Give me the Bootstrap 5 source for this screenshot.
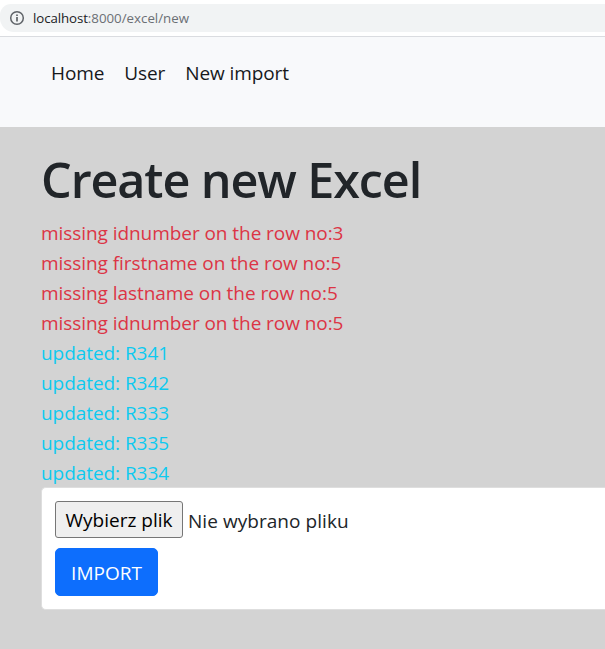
<!DOCTYPE html>
<html lang="pl">
<head>
<meta charset="utf-8">
<meta name="viewport" content="width=device-width, initial-scale=1">
<title>Create new Excel</title>
<link href="https://cdn.jsdelivr.net/npm/bootstrap@5.3.0/dist/css/bootstrap.min.css" rel="stylesheet">
<style>
body { font-family: "Open Sans", "Noto Sans", sans-serif; font-size: 19px; line-height: 30px; background: #d3d3d3; }
.address-bar { height: 37px; padding-top: 4px; border-bottom: 1px solid #dadce0; }
.address-pill { height: 28px; padding-left: 9px; background: #f1f3f4; border-radius: 11px 0 0 14px; font-size: 13.3px; line-height: 28px; color: #6b6f74; }
.address-pill b { font-weight: 400; color: #202124; letter-spacing: -.1px; }
.top-nav { height: 90px; background: #f8f9fb; padding: 21px 0 0 51px; gap: 20px; letter-spacing: -.1px; }
.top-nav a { color: #16181b; }
.page-body { padding: 22px 0 0 41px; }
.page-title { font-size: 48.5px; line-height: 60px; font-weight: 600; margin: 0 0 9px; letter-spacing: -1.1px; }
.log { letter-spacing: -.06px; }
.import-card { height: 123px; margin-top: -1px; padding: 13px; border-color: #dedede; border-radius: 5px; }
.pick { width: 128px; height: 37px; border: 1px solid #767676; border-radius: 3px; background: #efefef; color: #000; padding: 0; line-height: 37px; }
.picked { padding: 2px 0 0 5px; letter-spacing: .05px; }
.send { width: 103px; height: 48px; border-radius: 5px; font-size: inherit; margin-top: 10px; padding: 2px 0 0; background: #0d6efd; }
</style>
<script src="https://cdn.jsdelivr.net/npm/bootstrap@5.3.0/dist/js/bootstrap.bundle.min.js"></script>
</head>
<body>
<header class="address-bar bg-white">
  <div class="address-pill d-flex align-items-center">
    <svg width="16" height="16" viewBox="0 0 16 16" fill="none" stroke="#5f6368" stroke-width="1.5"><circle cx="8" cy="8" r="6.3"/><path d="M8 7v4.4M8 4.4V6" stroke-width="1.7"/></svg>
    <div class="ms-2"><b>localhost</b><span>:8000/excel/new</span></div>
  </div>
</header>
<nav class="top-nav d-flex align-items-start">
  <a class="text-decoration-none" href="#">Home</a>
  <a class="text-decoration-none" href="#">User</a>
  <a class="text-decoration-none" href="#">New import</a>
</nav>
<main class="page-body">
  <h1 class="page-title">Create new Excel</h1>
  <div class="log">
    <div class="text-danger">missing idnumber on the row no:3</div>
    <div class="text-danger">missing firstname on the row no:5</div>
    <div class="text-danger">missing lastname on the row no:5</div>
    <div class="text-danger">missing idnumber on the row no:5</div>
    <div class="text-info">updated: R341</div>
    <div class="text-info">updated: R342</div>
    <div class="text-info">updated: R333</div>
    <div class="text-info">updated: R335</div>
    <div class="text-info">updated: R334</div>
  </div>
  <form class="card import-card align-items-start border-end-0 rounded-end-0">
    <div class="d-flex align-items-center">
      <button type="button" class="pick">Wybierz plik</button>
      <div class="picked">Nie wybrano pliku</div>
    </div>
    <button type="button" class="btn btn-primary send">IMPORT</button>
  </form>
</main>
</body>
</html>
